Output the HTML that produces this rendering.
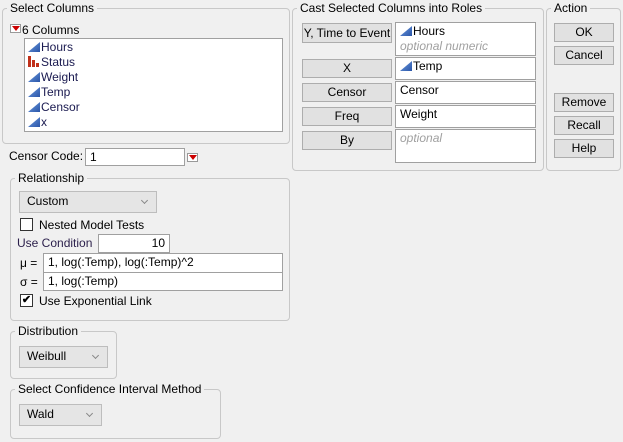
<!DOCTYPE html>
<html><head><meta charset="utf-8"><style>
*{box-sizing:border-box;margin:0;padding:0}
body{width:623px;height:442px;background:#f0f0f0;font-family:"Liberation Sans",sans-serif;font-size:12px;color:#000;position:relative;overflow:hidden}
.a{position:absolute;white-space:nowrap}
.grp{position:absolute;border:1px solid #c8c8c8;border-radius:4px}
.gt{position:absolute;background:#f0f0f0;padding:0 3px;top:-8px;left:4px;line-height:14px}
.btn{position:absolute;background:#e1e1e1;border:1px solid #adadad;text-align:center;line-height:16px}
.box{position:absolute;background:#fff;border:1px solid #a0a0a0;padding:1px 4px;line-height:15px}
.dd{position:absolute;background:#e5e5e5;border:1px solid #bdbdbd;padding-left:7px;line-height:19px}
.dd:after{content:"";position:absolute;right:9px;top:6px;width:4px;height:4px;border-right:1px solid #888;border-bottom:1px solid #888;transform:rotate(45deg)}
.tri{display:inline-block;width:12px;height:10px;background:linear-gradient(135deg,#6d9ce0,#2a55a8);clip-path:polygon(100% 0,100% 100%,0 100%);vertical-align:-1px;margin-right:1px}
.rt{position:absolute;width:11px;height:9px;background:#fff;border:1px solid #999}
.rt:after{content:"";position:absolute;left:1px;top:1px;border-left:4px solid transparent;border-right:4px solid transparent;border-top:5px solid #c00}
.it{position:absolute;left:3px;line-height:15px;color:#1a1a50}
.gray{color:#a0a0a0;font-style:italic}
.cb{position:absolute;width:13px;height:13px;background:#fff;border:1px solid #333}
.bar{display:inline-block;width:12px;height:11px;vertical-align:-1px;margin-right:1px;position:relative}
.bar i{position:absolute;bottom:0;width:3px;background:#c0301a}
</style></head><body>

<div class="grp" style="left:2px;top:8px;width:288px;height:136px"><div class="gt">Select Columns</div></div>
<div class="rt" style="left:10px;top:24px"></div>
<div class="a" style="left:22px;top:23px">6 Columns</div>
<div style="position:absolute;left:24px;top:38px;width:259px;height:94px;background:#fff;border:1px solid #a0a0a0">
<div class="it" style="top:1px"><span class="tri"></span>Hours</div>
<div class="it" style="top:16px"><span class="bar"><i style="left:0;height:11px"></i><i style="left:4px;height:7px"></i><i style="left:8px;height:4px"></i></span>Status</div>
<div class="it" style="top:31px"><span class="tri"></span>Weight</div>
<div class="it" style="top:46px"><span class="tri"></span>Temp</div>
<div class="it" style="top:61px"><span class="tri"></span>Censor</div>
<div class="it" style="top:76px"><span class="tri"></span>x</div>
</div>
<div class="a" style="left:9px;top:149px">Censor Code:</div>
<div class="box" style="left:85px;top:148px;width:100px;height:18px">1</div>
<div class="rt" style="left:187px;top:153px"></div>

<div class="grp" style="left:292px;top:8px;width:252px;height:163px"><div class="gt">Cast Selected Columns into Roles</div></div>
<div class="btn" style="left:302px;top:23px;width:90px;height:20px;line-height:18px">Y, Time to Event</div>
<div class="btn" style="left:302px;top:59px;width:90px;height:19px">X</div>
<div class="btn" style="left:302px;top:83px;width:90px;height:19px">Censor</div>
<div class="btn" style="left:302px;top:107px;width:90px;height:19px">Freq</div>
<div class="btn" style="left:302px;top:131px;width:90px;height:19px">By</div>
<div class="box" style="left:395px;top:22px;width:141px;height:34px"><span class="tri"></span>Hours<br><span class="gray">optional numeric</span></div>
<div class="box" style="left:395px;top:57px;width:141px;height:23px"><span class="tri"></span>Temp</div>
<div class="box" style="left:395px;top:81px;width:141px;height:23px">Censor</div>
<div class="box" style="left:395px;top:105px;width:141px;height:23px">Weight</div>
<div class="box" style="left:395px;top:129px;width:141px;height:34px"><span class="gray">optional</span></div>

<div class="grp" style="left:546px;top:8px;width:75px;height:163px"><div class="gt">Action</div></div>
<div class="btn" style="left:554px;top:23px;width:60px;height:19px">OK</div>
<div class="btn" style="left:554px;top:46px;width:60px;height:19px">Cancel</div>
<div class="btn" style="left:554px;top:93px;width:60px;height:19px">Remove</div>
<div class="btn" style="left:554px;top:116px;width:60px;height:19px">Recall</div>
<div class="btn" style="left:554px;top:139px;width:60px;height:19px">Help</div>

<div class="grp" style="left:10px;top:178px;width:280px;height:143px"><div class="gt">Relationship</div></div>
<div class="dd" style="left:19px;top:191px;width:138px;height:22px">Custom</div>
<div class="cb" style="left:20px;top:218px"></div>
<div class="a" style="left:39px;top:218px">Nested Model Tests</div>
<div class="a" style="left:17px;top:236px;color:#2a1e4a">Use Condition</div>
<div class="box" style="left:98px;top:234px;width:72px;height:19px;text-align:right">10</div>
<div class="a" style="left:20px;top:256px">μ =</div>
<div class="box" style="left:43px;top:253px;width:240px;height:20px">1, log(:Temp), log(:Temp)^2</div>
<div class="a" style="left:20px;top:275px">σ =</div>
<div class="box" style="left:43px;top:272px;width:240px;height:19px">1, log(:Temp)</div>
<div class="cb" style="left:20px;top:294px;font-size:11px;line-height:11px;text-align:center;font-weight:bold">✔</div>
<div class="a" style="left:39px;top:294px">Use Exponential Link</div>

<div class="grp" style="left:10px;top:331px;width:107px;height:48px"><div class="gt">Distribution</div></div>
<div class="dd" style="left:19px;top:346px;width:89px;height:22px">Weibull</div>

<div class="grp" style="left:10px;top:389px;width:211px;height:50px"><div class="gt">Select Confidence Interval Method</div></div>
<div class="dd" style="left:19px;top:404px;width:83px;height:22px">Wald</div>
</body></html>
